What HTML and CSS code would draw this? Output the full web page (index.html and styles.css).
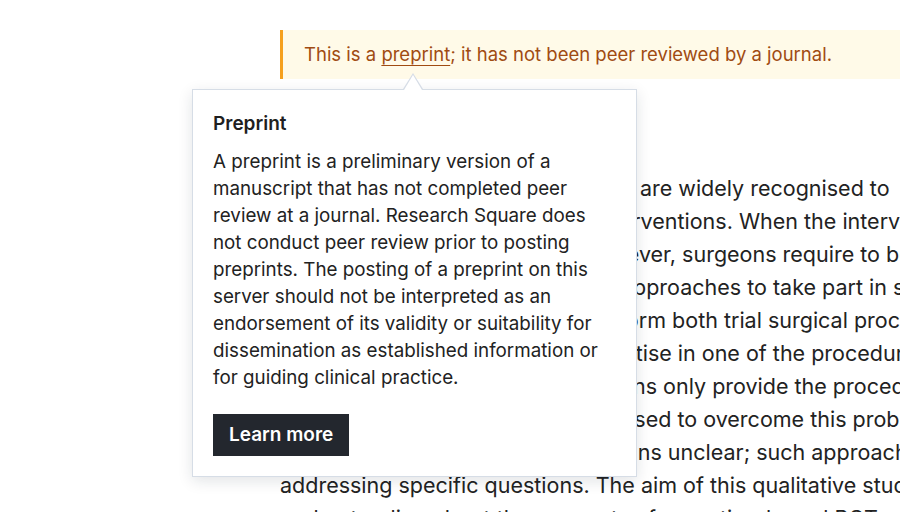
FILE: index.html
```html
<!DOCTYPE html>
<html lang="en">
<head>
  <meta charset="UTF-8">
  <title>Preprint</title>
  <link rel="stylesheet" href="styles.css">
</head>
<body>
  <main class="article">
    <div class="notice">
      This is a <span class="term">preprint</span>; it has not been peer reviewed by a journal.
    </div>

    <div class="popover">
      <h3 class="popover-title">Preprint</h3>
      <p class="popover-text">A preprint is a preliminary version of a manuscript that has not completed peer review at a journal. Research Square does not conduct peer review prior to posting preprints. The posting of a preprint on this server should not be interpreted as an endorsement of its validity or suitability for dissemination as established information or for guiding clinical practice.</p>
      <button class="learn-more">Learn more</button>
    </div>

    <section class="abstract">
      <h2 class="section-title">Background</h2>
      <p class="body-text">
        <span>Randomised controlled trials (RCT) are widely recognised to</span>
        <span>be the gold standard in testing interventions. When the intervention</span>
        <span>is a novel surgical procedure, however, surgeons require to be</span>
        <span>in equipoise about these surgical approaches to take part in surgical trials</span>
        <span>and will need the expertise to perform both trial surgical procedures.</span>
        <span>Yet, surgeons may only have expertise in one of the procedures.</span>
        <span>In expertise-based studies, surgeons only provide the procedure</span>
        <span>in which they are expert, are proposed to overcome this problem,</span>
        <span>yet how these are conducted remains unclear; such approaches</span>
        <span>addressing specific questions. The aim of this qualitative study was</span>
        <span>understanding about the concepts of expertise-based RCTs and the</span>
      </p>
    </section>
  </main>
</body>
</html>
```

FILE: styles.css
```css
html, body {
  margin: 0;
  height: 100%;
  overflow: hidden;
}
body {
  font-family: Inter, "Noto Sans", sans-serif;
  background: #fff;
  color: #222;
}
.article {
  position: relative;
  padding: 30px 0 0 280px;
  width: 1000px;
}
.notice {
  background: #fffae8;
  border-left: 3px solid #f5a01e;
  color: #a04b12;
  font-size: 18.5px;
  line-height: 27px;
  padding: 11px 24px 11px 21px;
}
.term {
  text-decoration: underline;
  text-underline-offset: 4px;
  text-decoration-thickness: 1px;
}
.section-title {
  margin: 43px 0 18px;
  font-size: 24px;
  line-height: 32px;
  font-weight: 600;
}
.body-text {
  margin: 0;
  font-size: 21.5px;
  line-height: 33px;
}
.body-text span {
  display: block;
  white-space: nowrap;
}

.popover {
  position: absolute;
  left: 192px;
  top: 89px;
  width: 403px;
  padding: 20px;
  background: #fff;
  border: 1px solid #d6dde6;
  box-shadow: 0 4px 14px rgba(20, 30, 50, 0.12);
  z-index: 2;
}
.popover::before,
.popover::after {
  content: "";
  position: absolute;
  width: 0;
  height: 0;
  border-style: solid;
  border-color: transparent;
}
.popover::before {
  top: -17px;
  left: 210px;
  border-width: 0 10px 16px 10px;
  border-bottom-color: #d6dde6;
}
.popover::after {
  top: -15px;
  left: 211px;
  border-width: 0 9px 15px 9px;
  border-bottom-color: #fff;
}
.popover-title {
  margin: 0 0 11px;
  font-size: 19px;
  line-height: 27px;
  font-weight: 600;
  color: #1f1f1f;
}
.popover-text {
  margin: 0 0 23px;
  font-size: 18.8px;
  line-height: 27px;
  color: #222;
}
.learn-more {
  display: block;
  background: #23272e;
  color: #fff;
  border: none;
  border-radius: 0;
  font-family: inherit;
  font-size: 19px;
  font-weight: 600;
  line-height: 26px;
  padding: 8px 16px;
  cursor: pointer;
}
```
